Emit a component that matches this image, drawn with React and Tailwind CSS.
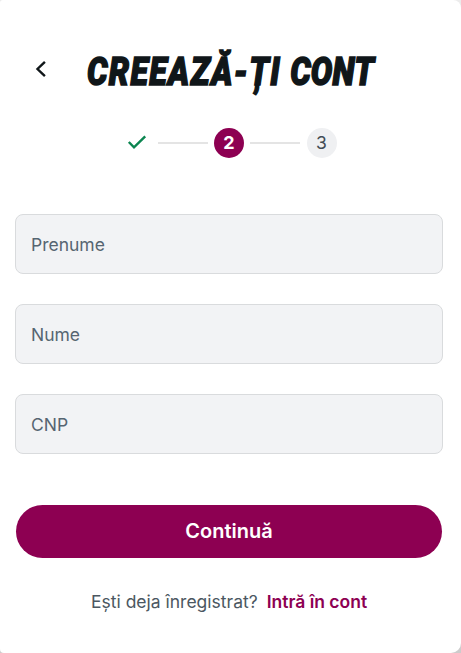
import { useState } from "react";

const fields = [
  { name: "firstName", label: "Prenume" },
  { name: "lastName", label: "Nume" },
  { name: "cnp", label: "CNP" },
];

const Stepper = () => (
  <div className="mt-[27px] flex h-[30px] items-center">
    <svg className="ml-[127px] h-5 w-5" viewBox="0 0 20 20" fill="none" stroke="#0b8550" strokeWidth="2.4">
      <path d="M1.8 9 7 14.3 18.2 3.3" />
    </svg>
    <span className="ml-[11px] h-[2px] w-[50px] bg-[#e4e4e4]" />
    <span className="ml-[6px] flex h-[30px] w-[30px] items-center justify-center rounded-full bg-[#8d0052] text-lg font-bold text-white">2</span>
    <span className="ml-[6px] h-[2px] w-[50px] bg-[#e4e4e4]" />
    <span className="ml-[7px] flex h-[30px] w-[30px] items-center justify-center rounded-full bg-[#eff0f2] pr-px text-[17.5px] text-[#424c55]">3</span>
  </div>
);

const App = () => {
  const [values, setValues] = useState({});

  return (
    <div className="h-[653px] w-[461px] overflow-hidden bg-linear-to-b from-[#ececec] to-[#cccccc] font-['Inter',sans-serif]">
      <main className="flex h-full flex-col rounded-tl-[3px] rounded-tr-[8px] rounded-br-[10px] rounded-bl-[4px] bg-white">
        <header className="flex h-[101px] items-end">
          <button type="button" aria-label="Înapoi" className="mb-[22px] ml-[34px] h-5 w-[14px]">
            <svg className="h-5 w-[14px]" viewBox="0 0 14 20" fill="none" stroke="#101619" strokeWidth="2.4">
              <path d="M10.9 2.8 3.5 10 10.9 17.2" />
            </svg>
          </button>
          <h1 className="-mb-px ml-[39px] w-[290px] origin-left scale-x-[0.835] whitespace-nowrap font-['Roboto',sans-serif] text-[38.5px] leading-[60px] font-black tracking-[1.6px] text-[#101619] italic [-webkit-text-stroke:1.5px_#101619]">
            CREEAZĂ-ȚI <span className="tracking-[0.2px]">CONT</span>
          </h1>
        </header>

        <Stepper />

        <form className="mt-[56px] flex flex-col px-[15px]" onSubmit={(e) => e.preventDefault()}>
          <div className="mr-[3px] flex flex-col gap-[30px]">
            {fields.map((field) => (
              <input
                key={field.name}
                aria-label={field.label}
                placeholder={field.label}
                value={values[field.name] || ""}
                onChange={(e) => setValues({ ...values, [field.name]: e.target.value })}
                className="h-[60px] w-full rounded-lg border border-[#d9dbdd] bg-[#f2f3f5] px-[15px] pt-px text-[17.5px] text-[#566571] outline-none placeholder:text-[#566571] placeholder:opacity-100"
              />
            ))}
          </div>
          <button type="submit" className="mt-[51px] mr-[4px] ml-px h-[53px] rounded-full bg-[#8d0052] pb-[2px] text-xl font-semibold text-white">
            Continuă
          </button>
        </form>

        <p className="mt-[30px] ml-[91px] whitespace-nowrap text-[17.5px] leading-7 text-[#4b5761]">
          Ești deja înregistrat?
          <a href="#login" className="ml-[9px] font-semibold text-[#8d0052]">Intră în cont</a>
        </p>
      </main>
    </div>
  );
};

export default App;
